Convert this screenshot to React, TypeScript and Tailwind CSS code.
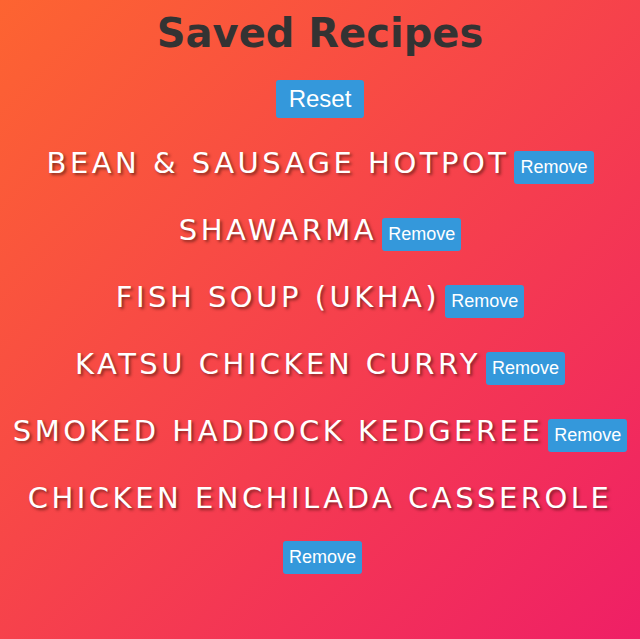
const recipes = [
  "Bean & Sausage Hotpot",
  "Shawarma",
  "Fish Soup (Ukha)",
  "Katsu Chicken Curry",
  "Smoked Haddock Kedgeree",
  "Chicken Enchilada Casserole",
];

export default function App() {
  return (
    <div className="min-h-[639px] bg-[linear-gradient(to_bottom_right,#fd6431,#ef1f66)] text-center font-['DejaVu_Sans',sans-serif]">
      <h1 className="pt-[6px] text-[40px] font-bold leading-[54px] text-[#333]">
        Saved Recipes
      </h1>
      <div className="mt-[20px]">
        <button className="h-[38px] w-[88px] rounded-[3px] bg-[#3498db] font-['Liberation_Sans',sans-serif] text-[24px] leading-none text-white">
          Reset
        </button>
      </div>
      <ul className="mt-[12px]">
        {recipes.map((r) => (
          <li
            key={r}
            className="py-[6px] text-[29px] leading-[55px] tracking-[3.5px] text-white uppercase [text-shadow:2px_2px_3px_rgba(60,20,10,0.6)]"
          >
            {r}
            <span className="text-[0px] leading-none tracking-normal"> </span>
            <button className="ml-[5px] h-[33px] rounded-[3px] bg-[#3498db] px-[6px] font-['Liberation_Sans',sans-serif] text-[18px] leading-none tracking-normal normal-case [text-shadow:none]">
              Remove
            </button>
          </li>
        ))}
      </ul>
    </div>
  );
}
